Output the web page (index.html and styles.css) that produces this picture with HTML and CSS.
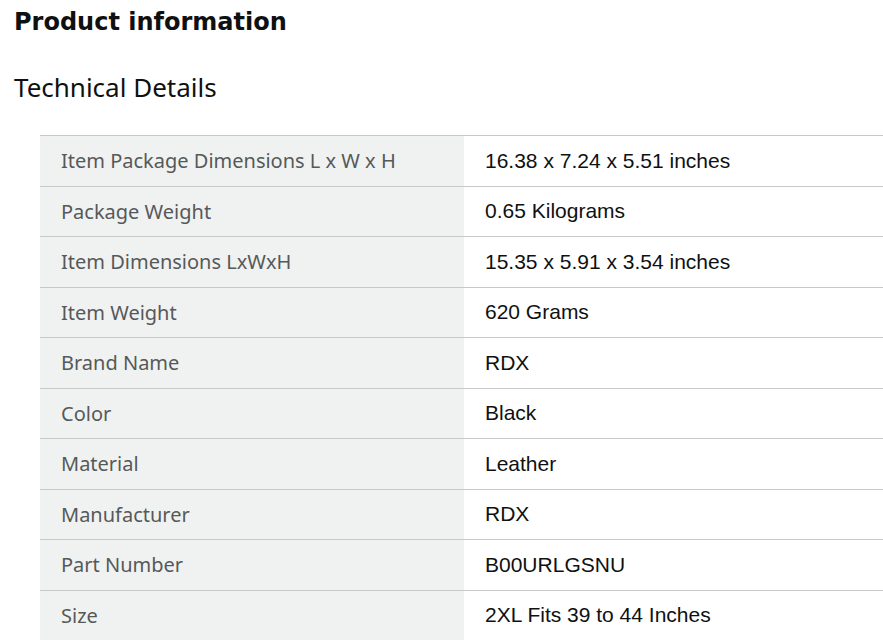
FILE: index.html
```html
<!DOCTYPE html>
<html>
<head>
<meta charset="utf-8">
<link rel="stylesheet" href="styles.css">
</head>
<body>
<div class="page">
  <h2 class="title">Product information</h2>
  <h3 class="subtitle">Technical Details</h3>
  <table class="specs">
    <tr><th>Item Package Dimensions L x W x H</th><td>16.38 x 7.24 x 5.51 inches</td></tr>
    <tr><th>Package Weight</th><td>0.65 Kilograms</td></tr>
    <tr><th>Item Dimensions LxWxH</th><td>15.35 x 5.91 x 3.54 inches</td></tr>
    <tr><th>Item Weight</th><td>620 Grams</td></tr>
    <tr><th>Brand Name</th><td>RDX</td></tr>
    <tr><th>Color</th><td>Black</td></tr>
    <tr><th>Material</th><td>Leather</td></tr>
    <tr><th>Manufacturer</th><td>RDX</td></tr>
    <tr><th>Part Number</th><td>B00URLGSNU</td></tr>
    <tr><th>Size</th><td>2XL Fits 39 to 44 Inches</td></tr>
  </table>
</div>
</body>
</html>
```

FILE: styles.css
```css
html, body {
  margin: 0;
  padding: 0;
  background: #fff;
  overflow: hidden;
}
.page {
  padding: 7px 0 0 14px;
}
.title {
  margin: 0;
  font-family: "DejaVu Sans", sans-serif;
  font-weight: bold;
  font-size: 24px;
  line-height: 30px;
  color: #0f1111;
}
.subtitle {
  margin: 34px 0 0 0;
  font-family: "Noto Sans", sans-serif;
  font-weight: normal;
  font-size: 26px;
  line-height: 32px;
  color: #0f1111;
}
.specs {
  margin: 32px 0 0 26px;
  width: 880px;
  border-collapse: collapse;
  border-top: 1px solid #c8c8c8;
}
.specs tr {
  border-bottom: 1px solid #c8c8c8;
}
.specs th {
  width: 424px;
  box-sizing: border-box;
  background: #f0f2f2;
  text-align: left;
  font-family: "Noto Sans", sans-serif;
  font-weight: normal;
  font-size: 20px;
  color: #565959;
  padding: 0 0 0 21px;
  height: 49.5px;
}
.specs td {
  font-family: "Liberation Sans", Arial, sans-serif;
  font-size: 21px;
  color: #0f1111;
  padding: 0 0 0 21px;
  height: 49.5px;
}
```
